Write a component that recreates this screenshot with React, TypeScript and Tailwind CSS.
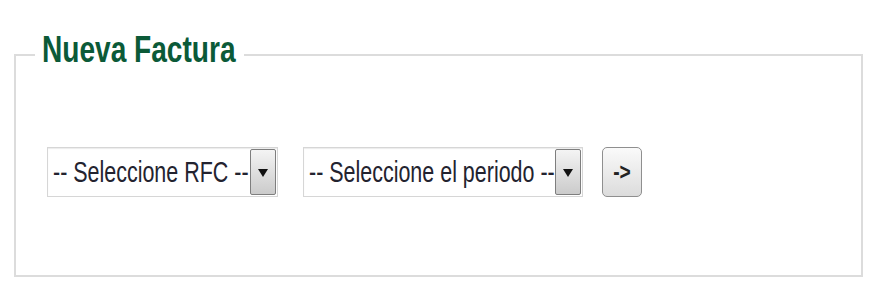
import React from "react";

const Arrow: React.FC = () => (
  <div className="shrink-0 w-[26px] h-[46px] my-[1px] mr-[1px] flex items-center justify-center border border-[#7e7e7e] rounded-[2px] bg-gradient-to-b from-[#f4f4f4] to-[#cbcbcb]">
    <svg width="10" height="9" viewBox="0 0 10 9">
      <path d="M0 1 L10 1 L5 9 Z" fill="#111" />
    </svg>
  </div>
);

const FakeSelect: React.FC<{ label: string; width: string }> = ({ label, width }) => (
  <div className={`${width} h-[50px] flex items-center bg-white border border-[#d6d6d6] shadow-[inset_0_1px_1px_rgba(0,0,0,0.08)]`}>
    <span className="flex-1 min-w-0 ml-[5px] mt-[2px] whitespace-nowrap">
      <span className="inline-block origin-left scale-x-[0.74] text-[29px] leading-none text-[#23232f]">
        {label}
      </span>
    </span>
    <Arrow />
  </div>
);

const App: React.FC = () => {
  return (
    <div className="w-[884px] h-[284px] bg-white pt-[35px] pl-[14px] font-['Liberation_Sans',Arial,sans-serif]">
      <fieldset className="w-[849px] h-[242px] border-2 border-[#dcdcdc] m-0 p-0 pl-[31px]">
        <legend className="ml-[-12px] px-[7px] h-[40px]">
          <span className="block w-[195px] h-[40px] whitespace-nowrap leading-[30px]">
            <span className="inline-block origin-left scale-x-[0.78] text-[36px] font-bold text-[#0b5a38]">
              Nueva Factura
            </span>
          </span>
        </legend>
        <div className="flex items-center mt-[72px]">
          <FakeSelect label="-- Seleccione RFC --" width="w-[231px]" />
          <div className="ml-[25px]">
            <FakeSelect label="-- Seleccione el periodo --" width="w-[280px]" />
          </div>
          <button className="ml-[19px] w-[40px] h-[50px] rounded-[5px] border border-[#8f8f8f] bg-gradient-to-b from-[#fafafa] to-[#dcdcdc] flex items-center justify-center">
            <span className="inline-block scale-x-[0.8] text-[24px] font-bold leading-none text-[#222]">-&gt;</span>
          </button>
        </div>
      </fieldset>
    </div>
  );
};

export default App;
